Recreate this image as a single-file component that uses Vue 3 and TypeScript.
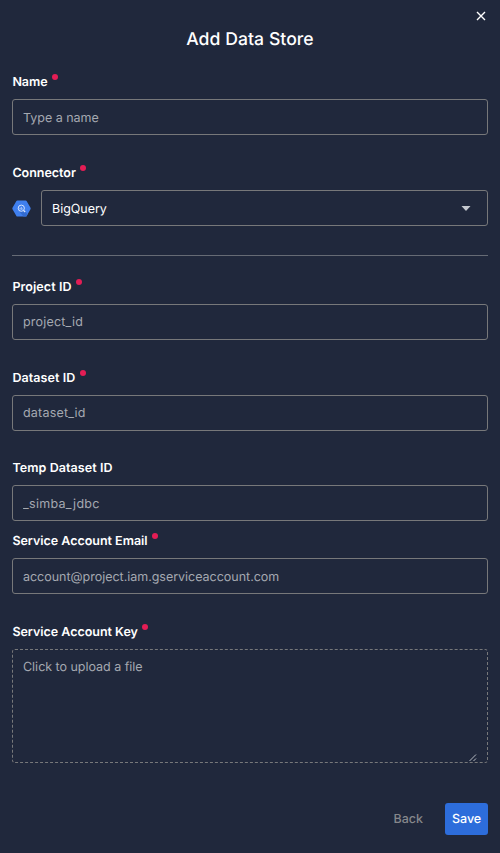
<script setup lang="ts">
import { ref } from 'vue'

interface Field {
  id: string
  label: string
  placeholder: string
  required: boolean
  compact?: boolean
}

const nameField: Field = { id: 'name', label: 'Name', placeholder: 'Type a name', required: true }

const connectionFields: Field[] = [
  { id: 'project', label: 'Project ID', placeholder: 'project_id', required: true },
  { id: 'dataset', label: 'Dataset ID', placeholder: 'dataset_id', required: true },
  { id: 'temp', label: 'Temp Dataset ID', placeholder: '_simba_jdbc', required: false, compact: true },
  { id: 'email', label: 'Service Account Email', placeholder: 'account@project.iam.gserviceaccount.com', required: true },
]

const values = ref<Record<string, string>>({})
const connector = ref('BigQuery')
</script>

<template>
  <form class="dialog" @submit.prevent>
    <header class="header">
      <button class="close" type="button">
        <svg width="10" height="10" viewBox="0 0 10 10">
          <path d="M1 1L9 9M9 1L1 9" stroke="#fff" stroke-width="1.4" fill="none" />
        </svg>
      </button>
      <h1 class="title">Add Data Store</h1>
    </header>

    <div class="field">
      <label class="label">{{ nameField.label }}<i class="dot"></i></label>
      <input v-model="values.name" class="control" :placeholder="nameField.placeholder" />
    </div>

    <div class="field connector">
      <label class="label">Connector<i class="dot"></i></label>
      <div class="row">
        <svg class="logo" width="19" height="17" viewBox="0 0 19 17">
          <path d="M5.4.5h8.2q.7 0 1 .6l3.9 6.7q.4.7 0 1.4l-3.9 6.7q-.3.6-1 .6H5.4q-.7 0-1-.6L.5 9.200q-.4-.7 0-1.400L4.400 1.100q.3-.6 1-.6z" fill="#3f7fee" />
          <path d="M12.300 10.800l3.400 3.400-1 1.800q-.3.5-1 .5h-2.200L7.500 11.700z" fill="#326bd0" />
          <circle cx="9.300" cy="8.200" r="3.100" fill="none" stroke="#e4edff" stroke-width=".9" />
          <path d="M11.600 10.500l1.600 1.500" stroke="#e4edff" stroke-width="1.100" />
          <path d="M8 8v1.400M9.300 6.900v3M10.600 8.500v.9" stroke="#dce8ff" stroke-width=".7" />
        </svg>
        <div class="control select">
          <span>{{ connector }}</span>
          <svg width="10" height="5" viewBox="0 0 10 5"><path d="M.5 0h9L5 5z" fill="#c5c9cf" /></svg>
        </div>
      </div>
    </div>

    <hr class="divider" />

    <div v-for="f in connectionFields" :key="f.id" class="field" :class="{ compact: f.compact, [f.id]: true }">
      <label class="label">{{ f.label }}<i v-if="f.required" class="dot"></i></label>
      <input v-model="values[f.id]" class="control" :placeholder="f.placeholder" />
    </div>

    <div class="field upload">
      <label class="label">Service Account Key<i class="dot"></i></label>
      <div class="dropzone">
        <span>Click to upload a file</span>
        <svg class="grip" width="8" height="8" viewBox="0 0 8 8">
          <path d="M.5 7L7 .5M4.500 7L7 4.500" stroke="#c8ccd2" stroke-width=".9" fill="none" />
        </svg>
      </div>
    </div>

    <footer class="actions">
      <button class="button back" type="button">Back</button>
      <button class="button save" type="submit">Save</button>
    </footer>
  </form>
</template>

<style>
body {
  background: #20283c;
}
</style>

<style scoped>
.dialog {
  box-sizing: border-box;
  display: flex;
  flex-direction: column;
  height: 853px;
  padding: 10px 12px 18px;
  overflow: hidden;
  background: #20283c;
  color: #fff;
  font-family: Inter, sans-serif;
  font-size: 12.5px;
  letter-spacing: -0.02px;
  text-rendering: geometricPrecision;
}
.header {
  display: flex;
  flex-direction: column;
  height: 63px;
}
.close {
  display: flex;
  align-self: flex-end;
  margin-right: 2px;
  padding: 1px 0;
  border: 0;
  background: none;
}
.title {
  margin: 4px 0 0;
  font-size: 17.6px;
  font-weight: 500;
  line-height: 27px;
  letter-spacing: 0.05px;
  text-align: center;
}
.field {
  display: flex;
  flex-direction: column;
  gap: 8px;
  margin-bottom: 29px;
}
.field.dataset {
  margin-bottom: 28px;
}
.field.compact {
  margin-bottom: 11px;
}
.label {
  display: flex;
  height: 18px;
  padding-left: 0.4px;
  font-weight: 600;
  line-height: 19px;
}
.dot {
  width: 6px;
  height: 6px;
  margin: 1px 0 0 4.5px;
  border-radius: 50%;
  background: #e41d55;
}
.control {
  box-sizing: border-box;
  width: 100%;
  height: 36px;
  padding: 2px 10px 0;
  border: 1px solid #77787a;
  border-radius: 3px;
  outline: 0;
  background: transparent;
  color: #fff;
  font: inherit;
  letter-spacing: inherit;
  text-rendering: inherit;
}
.control::placeholder {
  color: #a5a9b1;
  opacity: 1;
}
.project .control,
.dataset .control {
  padding-top: 0;
  letter-spacing: 0.2px;
}
.temp .control {
  letter-spacing: 0.3px;
}
.project .label,
.dataset .label,
.temp .label {
  letter-spacing: 0.08px;
}
.row {
  display: flex;
  align-items: center;
  gap: 10px;
}
.logo {
  flex: none;
}
.select {
  display: flex;
  flex: 1;
  align-items: center;
  justify-content: space-between;
  padding: 0 16px 0 10px;
}
.select span {
  padding-top: 2px;
}
.divider {
  width: 100%;
  height: 1px;
  margin: 0 0 22px;
  border: 0;
  background: #666b75;
}
.dropzone {
  box-sizing: border-box;
  display: flex;
  justify-content: space-between;
  height: 114px;
  padding: 8px 10px 0;
  border: 1px dashed #77787a;
  border-radius: 3px;
  color: #a5a9b1;
  line-height: 19px;
}
.grip {
  align-self: flex-end;
}
.upload {
  margin-bottom: 0;
}
.actions {
  display: flex;
  justify-content: flex-end;
  margin-top: auto;
  gap: 15px;
}
.button {
  height: 32px;
  padding: 1px 7px 0;
  border: 0;
  border-radius: 3px;
  font: 500 12.5px Inter, sans-serif;
  letter-spacing: -0.02px;
  text-rendering: inherit;
}
.back {
  background: none;
  color: #85878b;
}
.save {
  width: 43px;
  background: #2d6ddb;
  color: #fff;
}
</style>
